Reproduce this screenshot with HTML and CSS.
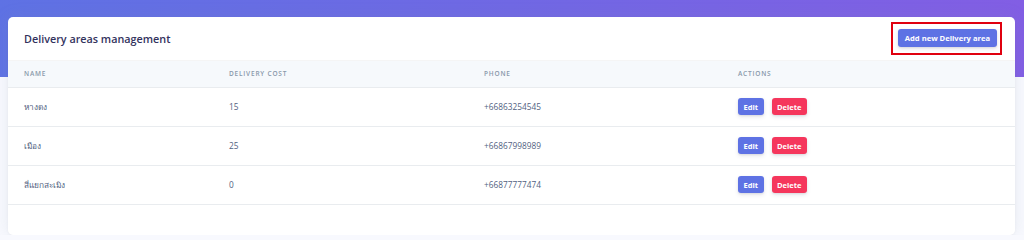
FILE: index.html
```html
<!DOCTYPE html>
<html lang="en">
<head>
    <meta charset="UTF-8">
    <title>Delivery areas management</title>
    <link rel="stylesheet" href="styles.css">
</head>
<body>
    <div class="main-content">
        <div class="card">
            <div class="card-header">
                <h3>Delivery areas management</h3>
                <span class="highlight">
                    <button class="btn btn-primary btn-sm">Add new Delivery area</button>
                </span>
            </div>

            <table class="table">
                <thead>
                    <tr>
                        <th class="col-name">Name</th>
                        <th class="col-cost">Delivery cost</th>
                        <th class="col-phone">Phone</th>
                        <th>Actions</th>
                    </tr>
                </thead>
                <tbody>
                    <tr>
                        <td>หางดง</td>
                        <td>15</td>
                        <td>+66863254545</td>
                        <td>
                            <div class="actions">
                                <button class="btn btn-primary">Edit</button>
                                <button class="btn btn-danger">Delete</button>
                            </div>
                        </td>
                    </tr>
                    <tr>
                        <td>เมือง</td>
                        <td>25</td>
                        <td>+66867998989</td>
                        <td>
                            <div class="actions">
                                <button class="btn btn-primary">Edit</button>
                                <button class="btn btn-danger">Delete</button>
                            </div>
                        </td>
                    </tr>
                    <tr>
                        <td>สี่แยกสะเมิง</td>
                        <td>0</td>
                        <td>+66877777474</td>
                        <td>
                            <div class="actions">
                                <button class="btn btn-primary">Edit</button>
                                <button class="btn btn-danger">Delete</button>
                            </div>
                        </td>
                    </tr>
                </tbody>
            </table>

            <div class="card-footer"></div>
        </div>
    </div>
</body>
</html>
```

FILE: styles.css
```css
:root {
    --primary: #5e72e4;
    --danger: #f5365c;
    --heading: #32325d;
    --text: #525f7f;
    --muted: #8898aa;
    --border: #e9ecef;
}

body {
    font-family: 'Open Sans', 'Noto Sans', sans-serif;
    margin: 0;
    padding: 0;
    background: linear-gradient(87deg, #5e72e4 0%, #825ee4 100%) top / 100% 77px no-repeat, #f8f9fe;
    color: var(--text);
}

.main-content {
    padding: 17px 9px 0 8px;
}

.card {
    background: #fff;
    border-radius: 5px;
    box-shadow: 0 0 16px rgba(136, 152, 170, 0.15), 0 1px 3px rgba(0, 0, 0, 0.04);
    overflow: hidden;
}

.card-header {
    height: 44px;
    padding: 0 16px;
    display: flex;
    align-items: center;
    justify-content: space-between;
    border-bottom: 1px solid rgba(0, 0, 0, 0.04);
    box-sizing: border-box;
}

.card-header h3 {
    margin: 0;
    font-size: 10.8px;
    font-weight: 600;
    color: var(--heading);
}

.highlight {
    display: flex;
    padding: 5px 3px 6px 5px;
    margin-right: -3px;
    border: 2px solid #e0000f;
}

.btn {
    font-family: 'Open Sans', sans-serif;
    font-weight: 700;
    font-size: 7.5px;
    color: #fff;
    border: none;
    border-radius: 3px;
    height: 17px;
    padding: 0 5.5px;
    cursor: pointer;
    box-shadow: 0 2px 4px rgba(50, 50, 93, 0.11), 0 1px 2px rgba(0, 0, 0, 0.08);
}

.btn-sm {
    height: 18px;
    font-size: 7.6px;
    padding: 0 7px;
}

.btn-primary {
    background: var(--primary);
}

.btn-danger {
    background: var(--danger);
}

.table {
    width: 100%;
    border-collapse: collapse;
    table-layout: fixed;
}

.table th,
.table td {
    text-align: left;
    padding: 0 0 0 16px;
}

.table th {
    height: 26px;
    background: #f6f9fc;
    border-bottom: 1px solid var(--border);
    font-size: 6.5px;
    font-weight: 600;
    text-transform: uppercase;
    letter-spacing: 0.8px;
    color: var(--muted);
    box-sizing: border-box;
}

.col-name {
    width: 205px;
}

.col-cost {
    width: 255px;
}

.col-phone {
    width: 254px;
}

.table td {
    height: 39px;
    font-size: 8.3px;
    border-bottom: 1px solid var(--border);
    box-sizing: border-box;
}

.actions {
    display: flex;
    gap: 8px;
}

.card-footer {
    height: 30px;
}
```
